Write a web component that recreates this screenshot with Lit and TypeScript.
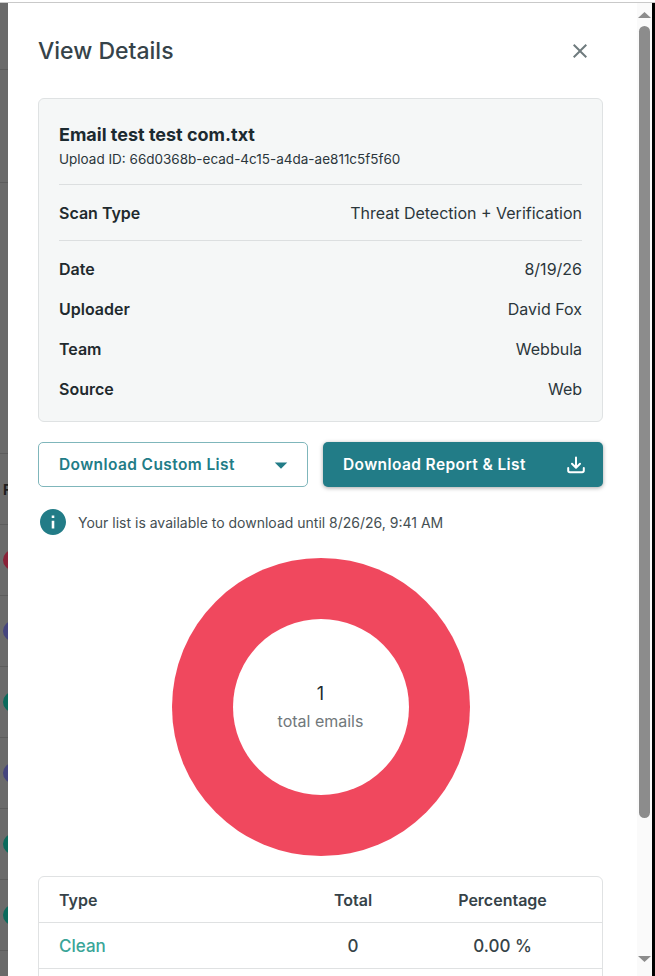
import { css, html, LitElement } from 'lit';
import { customElement } from 'lit/decorators.js';

const detailRows = [
  ['Date', '8/19/26'],
  ['Uploader', 'David Fox'],
  ['Team', 'Webbula'],
  ['Source', 'Web'],
];

const railDots = ['#8a2238', '#45457e', '#0b6a5c', '#45457e', '#0b6a5c', '#0b6a5c'];

@customElement('app-root')
export class AppRoot extends LitElement {
  static override styles = css`
    :host {
      display: block;
      height: 976px;
      overflow: hidden;
      font-family: Inter, 'Liberation Sans', sans-serif;
      color: #1f2a2e;
      background: #fff;
    }
    * {
      box-sizing: border-box;
    }
    .window {
      display: flex;
      flex-direction: column;
      height: 976px;
    }
    .topline {
      height: 3px;
      flex: none;
      background: linear-gradient(#fff 0 2px, #c9c9c9 2px);
    }
    .body {
      flex: 1;
      min-height: 0;
      display: flex;
    }
    /* dimmed page behind the drawer */
    .rail {
      width: 8px;
      flex: none;
      overflow: hidden;
      background: #6a6a6a;
      display: flex;
      flex-direction: column;
    }
    .rail-top {
      height: 67px;
      flex: none;
      border-bottom: 1px solid #5c5c5c;
    }
    .rail-mid {
      height: 113px;
      flex: none;
      border-bottom: 1px solid #5c5c5c;
    }
    .rail-gap {
      height: 271px;
      flex: none;
      border-bottom: 1px solid #5c5c5c;
    }
    .rail-head {
      height: 71px;
      flex: none;
      border-bottom: 1px solid #5c5c5c;
      display: flex;
      align-items: center;
      padding-left: 3px;
      font-size: 14px;
      font-weight: 700;
      color: #1d1d1d;
    }
    .rail-row {
      height: 71px;
      flex: none;
      border-bottom: 1px solid #5c5c5c;
      display: flex;
      align-items: center;
      padding-left: 3px;
    }
    .rail-dot {
      width: 20px;
      height: 20px;
      flex: none;
      border-radius: 50%;
    }
    .drawer {
      flex: 1;
      min-width: 0;
      overflow: hidden;
      background: #fff;
      padding: 0 34px 0 30px;
    }
    .head {
      height: 95px;
      display: flex;
      align-items: center;
      justify-content: space-between;
      padding-top: 1px;
    }
    h1 {
      margin: 0;
      font-size: 23px;
      font-weight: 500;
      color: #364349;
    }
    .close {
      display: block;
      width: 24px;
      height: 24px;
      margin-right: 11px;
      fill: #6f7b7e;
    }
    .card {
      height: 324px;
      background: #f5f7f7;
      border: 1px solid #dfe2e3;
      border-radius: 6px;
      padding: 0 20px;
    }
    .file {
      height: 86px;
      padding-top: 24px;
      border-bottom: 1px solid #dcdfe0;
    }
    .file-name {
      font-size: 18px;
      line-height: 24px;
      font-weight: 700;
      color: #1c2a30;
    }
    .file-id {
      font-size: 13.5px;
      line-height: 24px;
      color: #2b363b;
    }
    .row {
      display: flex;
      align-items: center;
      justify-content: space-between;
      height: 40px;
      font-size: 16px;
      color: #2b363b;
    }
    .row b {
      font-weight: 600;
      color: #1f2a2e;
    }
    .scan {
      height: 56px;
      border-bottom: 1px solid #dcdfe0;
    }
    .rows {
      padding-top: 8px;
    }
    .actions {
      display: flex;
      gap: 15px;
      margin-top: 20px;
    }
    .btn {
      height: 45px;
      display: flex;
      align-items: center;
      justify-content: space-between;
      font: inherit;
      font-size: 15.5px;
      font-weight: 600;
      letter-spacing: 0.4px;
      border-radius: 5px;
      padding: 0 18px 0 20px;
    }
    .outline {
      width: 270px;
      background: #fff;
      color: #227c87;
      border: 1px solid #7fb6bb;
    }
    .solid {
      width: 280px;
      background: #227c87;
      color: #fff;
      border: none;
      box-shadow: 0 1px 4px rgba(0, 0, 0, 0.35);
    }
    .caret {
      width: 30px;
      height: 30px;
      margin-right: -7px;
      fill: #227c87;
    }
    .dl {
      width: 18px;
      height: 18px;
      fill: none;
      stroke: #fff;
      stroke-width: 2;
      stroke-linecap: round;
      stroke-linejoin: round;
    }
    .notice {
      display: flex;
      align-items: center;
      gap: 12px;
      height: 26px;
      margin-top: 22px;
      padding-left: 2px;
      font-size: 14px;
      color: #454f53;
    }
    .notice svg {
      width: 26px;
      height: 26px;
      flex: none;
    }
    .donut-wrap {
      display: flex;
      justify-content: center;
      margin-top: 23px;
    }
    .donut {
      width: 298px;
      height: 298px;
      border-radius: 50%;
      background: #f0485e;
      display: flex;
      align-items: center;
      justify-content: center;
    }
    .hole {
      width: 176px;
      height: 176px;
      border-radius: 50%;
      background: #fff;
      display: flex;
      flex-direction: column;
      align-items: center;
      justify-content: center;
    }
    .hole-num {
      font-size: 18px;
      line-height: 24px;
      color: #222b2e;
    }
    .hole-label {
      font-size: 16px;
      line-height: 24px;
      margin-top: 3px;
      color: #71787b;
    }
    .table {
      margin-top: 20px;
      border: 1px solid #e0e2e3;
      border-radius: 6px;
    }
    .tr {
      display: grid;
      grid-template-columns: 1fr 100px 199px;
      align-items: center;
      height: 46px;
      padding-left: 20px;
      border-bottom: 1px solid #dfe1e2;
      font-size: 17px;
      font-weight: 500;
      color: #364349;
    }
    .tr > :not(:first-child) {
      text-align: center;
    }
    .th {
      font-size: 16px;
      font-weight: 600;
    }
    .clean {
      color: #3aa598;
    }
    .blank {
      height: 60px;
      border-bottom: none;
    }
    .scrollbar {
      width: 15px;
      flex: none;
      background: #fafafa;
      display: flex;
      flex-direction: column;
      align-items: center;
    }
    .arrow {
      width: 13px;
      height: 6px;
      flex: none;
      background: #8c8c8c;
    }
    .arrow.up {
      margin-top: 9px;
      clip-path: polygon(50% 0, 100% 100%, 0 100%);
    }
    .arrow.down {
      margin-top: 138px;
      clip-path: polygon(0 0, 100% 0, 50% 100%);
    }
    .thumb {
      width: 11px;
      height: 792px;
      flex: none;
      margin-top: 8px;
      border-radius: 6px;
      background: #8c8c8c;
    }
    .edge {
      width: 3px;
      flex: none;
      background: #000;
    }
  `;

  private renderRail() {
    return html`
      <div class="rail">
        <div class="rail-top"></div>
        <div class="rail-mid"></div>
        <div class="rail-gap"></div>
        <div class="rail-head">F</div>
        ${railDots.map(
          (color) => html`<div class="rail-row"><span class="rail-dot" style="background:${color}"></span></div>`,
        )}
      </div>
    `;
  }

  override render() {
    return html`
      <div class="window">
        <div class="topline"></div>
        <div class="body">
          ${this.renderRail()}
          <main class="drawer">
            <header class="head">
              <h1>View Details</h1>
              <svg class="close" viewBox="0 0 24 24">
                <path d="M19 6.41 17.59 5 12 10.59 6.41 5 5 6.41 10.59 12 5 17.59 6.41 19 12 13.41 17.59 19 19 17.59 13.41 12z" />
              </svg>
            </header>
            <section class="card">
              <div class="file">
                <div class="file-name">Email test test com.txt</div>
                <div class="file-id">Upload ID: 66d0368b-ecad-4c15-a4da-ae811c5f5f60</div>
              </div>
              <div class="row scan"><b>Scan Type</b><span>Threat Detection + Verification</span></div>
              <div class="rows">
                ${detailRows.map(([k, v]) => html`<div class="row"><b>${k}</b><span>${v}</span></div>`)}
              </div>
            </section>
            <div class="actions">
              <button class="btn outline">
                Download Custom List
                <svg class="caret" viewBox="0 0 24 24"><path d="m7 10 5 5 5-5z" /></svg>
              </button>
              <button class="btn solid">
                Download Report &amp; List
                <svg class="dl" viewBox="0 0 18 18">
                  <path d="M9 1.5v10M5 7.8l4 4 4-4M1.2 12v2.6c0 1 .7 1.7 1.7 1.7h12.2c1 0 1.7-.7 1.7-1.7V12" />
                </svg>
              </button>
            </div>
            <div class="notice">
              <svg viewBox="2 2 20 20">
                <path fill="#227c87" d="M12 2C6.48 2 2 6.48 2 12s4.48 10 10 10 10-4.48 10-10S17.52 2 12 2zm1 15h-2v-6h2v6zm0-8h-2V7h2v2z" />
              </svg>
              <span>Your list is available to download until 8/26/26, 9:41 AM</span>
            </div>
            <div class="donut-wrap">
              <div class="donut">
                <div class="hole">
                  <div class="hole-num">1</div>
                  <div class="hole-label">total emails</div>
                </div>
              </div>
            </div>
            <section class="table">
              <div class="tr th"><span>Type</span><span>Total</span><span>Percentage</span></div>
              <div class="tr"><span class="clean">Clean</span><span>0</span><span>0.00 %</span></div>
              <div class="tr blank"></div>
            </section>
          </main>
          <div class="scrollbar">
            <div class="arrow up"></div>
            <div class="thumb"></div>
            <div class="arrow down"></div>
          </div>
          <div class="edge"></div>
        </div>
      </div>
    `;
  }
}
